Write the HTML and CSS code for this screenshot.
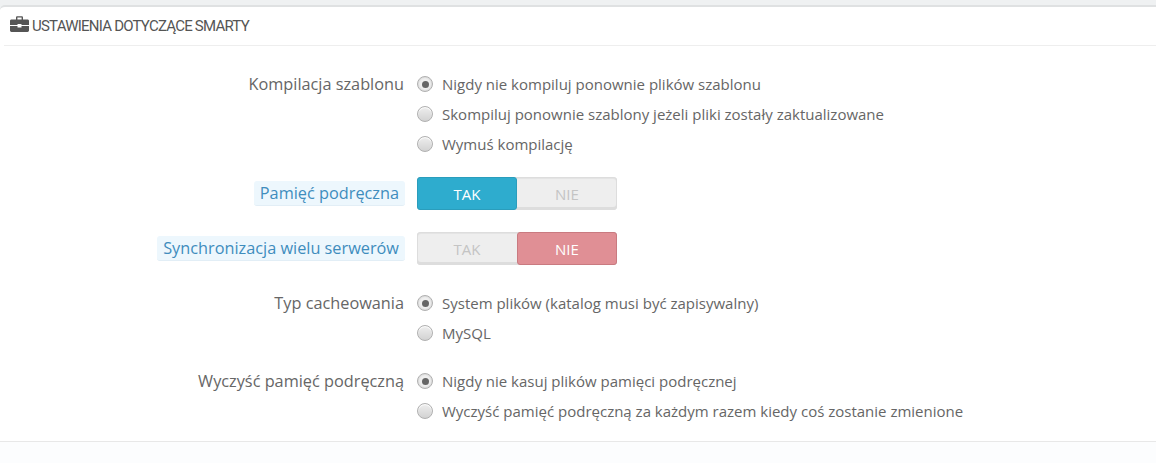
FILE: index.html
```html
<!DOCTYPE html>
<html lang="pl">
<head>
    <meta charset="UTF-8">
    <meta name="viewport" content="width=device-width, initial-scale=1.0">
    <title>Ustawienia dotyczące Smarty</title>
    <link rel="stylesheet" href="styles.css">
</head>
<body>
    <div class="panel">
        <div class="panel-heading">
            <svg class="heading-icon" viewBox="0 0 19 16" width="19" height="16">
                <path d="M6 4V1.500C6 .7 6.600.2 7.200.2h4.600c.6 0 1.200.5 1.200 1.300V4h-1.400V1.600H7.400V4z"/>
                <path d="M1.400 3.500h16.200c.7 0 1.400.6 1.400 1.300V9H11.500V8h-4v1H0V4.800c0-.7.700-1.300 1.400-1.300z"/>
                <path d="M0 10h7.500v1.500h4V10H19v4.600c0 .7-.7 1.400-1.400 1.400H1.400C.7 16 0 15.300 0 14.600z"/>
            </svg>
            <span>USTAWIENIA DOTYCZĄCE SMARTY</span>
        </div>

        <div class="form-body">
            <div class="form-row">
                <div class="form-label">Kompilacja szablonu</div>
                <div class="radio-group">
                    <label class="radio"><span class="radio-mark checked"></span>Nigdy nie kompiluj ponownie plików szablonu</label>
                    <label class="radio"><span class="radio-mark"></span>Skompiluj ponownie szablony jeżeli pliki zostały zaktualizowane</label>
                    <label class="radio"><span class="radio-mark"></span>Wymuś kompilację</label>
                </div>
            </div>

            <div class="form-row switch-row">
                <div class="form-label"><span class="label-hint">Pamięć podręczna</span></div>
                <div class="switch">
                    <span class="switch-option on-yes">TAK</span>
                    <span class="switch-option">NIE</span>
                </div>
            </div>

            <div class="form-row switch-row last-switch">
                <div class="form-label"><span class="label-hint">Synchronizacja wielu serwerów</span></div>
                <div class="switch">
                    <span class="switch-option">TAK</span>
                    <span class="switch-option on-no">NIE</span>
                </div>
            </div>

            <div class="form-row">
                <div class="form-label">Typ cacheowania</div>
                <div class="radio-group">
                    <label class="radio"><span class="radio-mark checked"></span>System plików (katalog musi być zapisywalny)</label>
                    <label class="radio"><span class="radio-mark"></span>MySQL</label>
                </div>
            </div>

            <div class="form-row">
                <div class="form-label">Wyczyść pamięć podręczną</div>
                <div class="radio-group">
                    <label class="radio"><span class="radio-mark checked"></span>Nigdy nie kasuj plików pamięci podręcznej</label>
                    <label class="radio"><span class="radio-mark"></span>Wyczyść pamięć podręczną za każdym razem kiedy coś zostanie zmienione</label>
                </div>
            </div>
        </div>

        <div class="panel-footer"></div>
    </div>
</body>
</html>
```

FILE: styles.css
```css
html, body {
    height: 100%;
}

body {
    margin: 0;
    padding-top: 5px;
    box-sizing: border-box;
    background-color: #eff1f2;
    font-family: "Open Sans", Arial, sans-serif;
    font-size: 15px;
    color: #666;
    overflow: hidden;
}

.panel {
    height: 100%;
    background-color: #fff;
    border-top: 2px solid #dfe1e2;
    border-top-left-radius: 5px;
    display: flex;
    flex-direction: column;
}

.panel-heading {
    display: flex;
    align-items: center;
    height: 38px;
    margin-left: 4px;
    padding-left: 6px;
    border-bottom: 1px solid #eee;
    color: #555;
    font-family: "Liberation Sans Narrow", "Roboto", sans-serif;
    font-size: 15px;
    letter-spacing: -0.77px;
}

.heading-icon {
    fill: #555;
    margin-right: 3px;
    margin-top: -4px;
}

.form-body {
    padding-top: 23px;
    padding-bottom: 15px;
}

.form-row {
    display: flex;
    margin-bottom: 18px;
}

.form-row:last-child {
    margin-bottom: 0;
}

.form-label {
    width: 404px;
    flex-shrink: 0;
    text-align: right;
    line-height: 30px;
    font-size: 16.3px;
}

.switch-row .form-label {
    line-height: 33px;
}

.switch-row {
    margin-bottom: 22px;
}

.last-switch {
    margin-bottom: 23px;
}

.label-hint {
    display: inline-block;
    line-height: 24px;
    margin-right: -1px;
    padding: 0 6px;
    background-color: #edf7fd;
    border-bottom: 1px solid #e2eef6;
    border-radius: 3px;
    color: #3f8dbd;
}

.radio-group {
    margin-left: 13px;
}

.radio {
    display: flex;
    align-items: center;
    height: 30px;
}

.radio-mark {
    width: 14px;
    height: 14px;
    margin-right: 9px;
    border: 1px solid #b0b0b0;
    border-radius: 50%;
    background: linear-gradient(#eee, #d2d2d2);
    box-shadow: inset 0 1px 1px #fff;
    display: flex;
    align-items: center;
    justify-content: center;
}

.radio-mark.checked {
    background: #efefef;
    box-shadow: inset 0 0 2px #bbb;
}

.radio-mark.checked::after {
    content: "";
    width: 7px;
    height: 7px;
    border-radius: 50%;
    background-color: #666;
}

.switch {
    display: flex;
    width: 200px;
    height: 33px;
    margin-left: 13px;
    border-radius: 4px;
    background-color: #eee;
    box-shadow: inset 0 0 0 1px #ddd, inset 0 -2px 0 1px #ddd, inset 0 1px 0 1px #e4e4e4;
}

.switch-option {
    width: 100px;
    display: flex;
    align-items: center;
    justify-content: center;
    box-sizing: border-box;
    color: #c4c4c4;
    font-size: 15px;
}

.on-yes {
    background-color: #2eacce;
    border: 1px solid #2a9dbc;
    border-radius: 3px;
    color: #fff;
}

.on-no {
    background-color: #e08f95;
    border: 1px solid #c97a80;
    border-radius: 3px;
    color: #fff;
}

.panel-footer {
    flex: 1;
    background-color: #fcfdfe;
    border-top: 1px solid #e8e8e8;
}
```
